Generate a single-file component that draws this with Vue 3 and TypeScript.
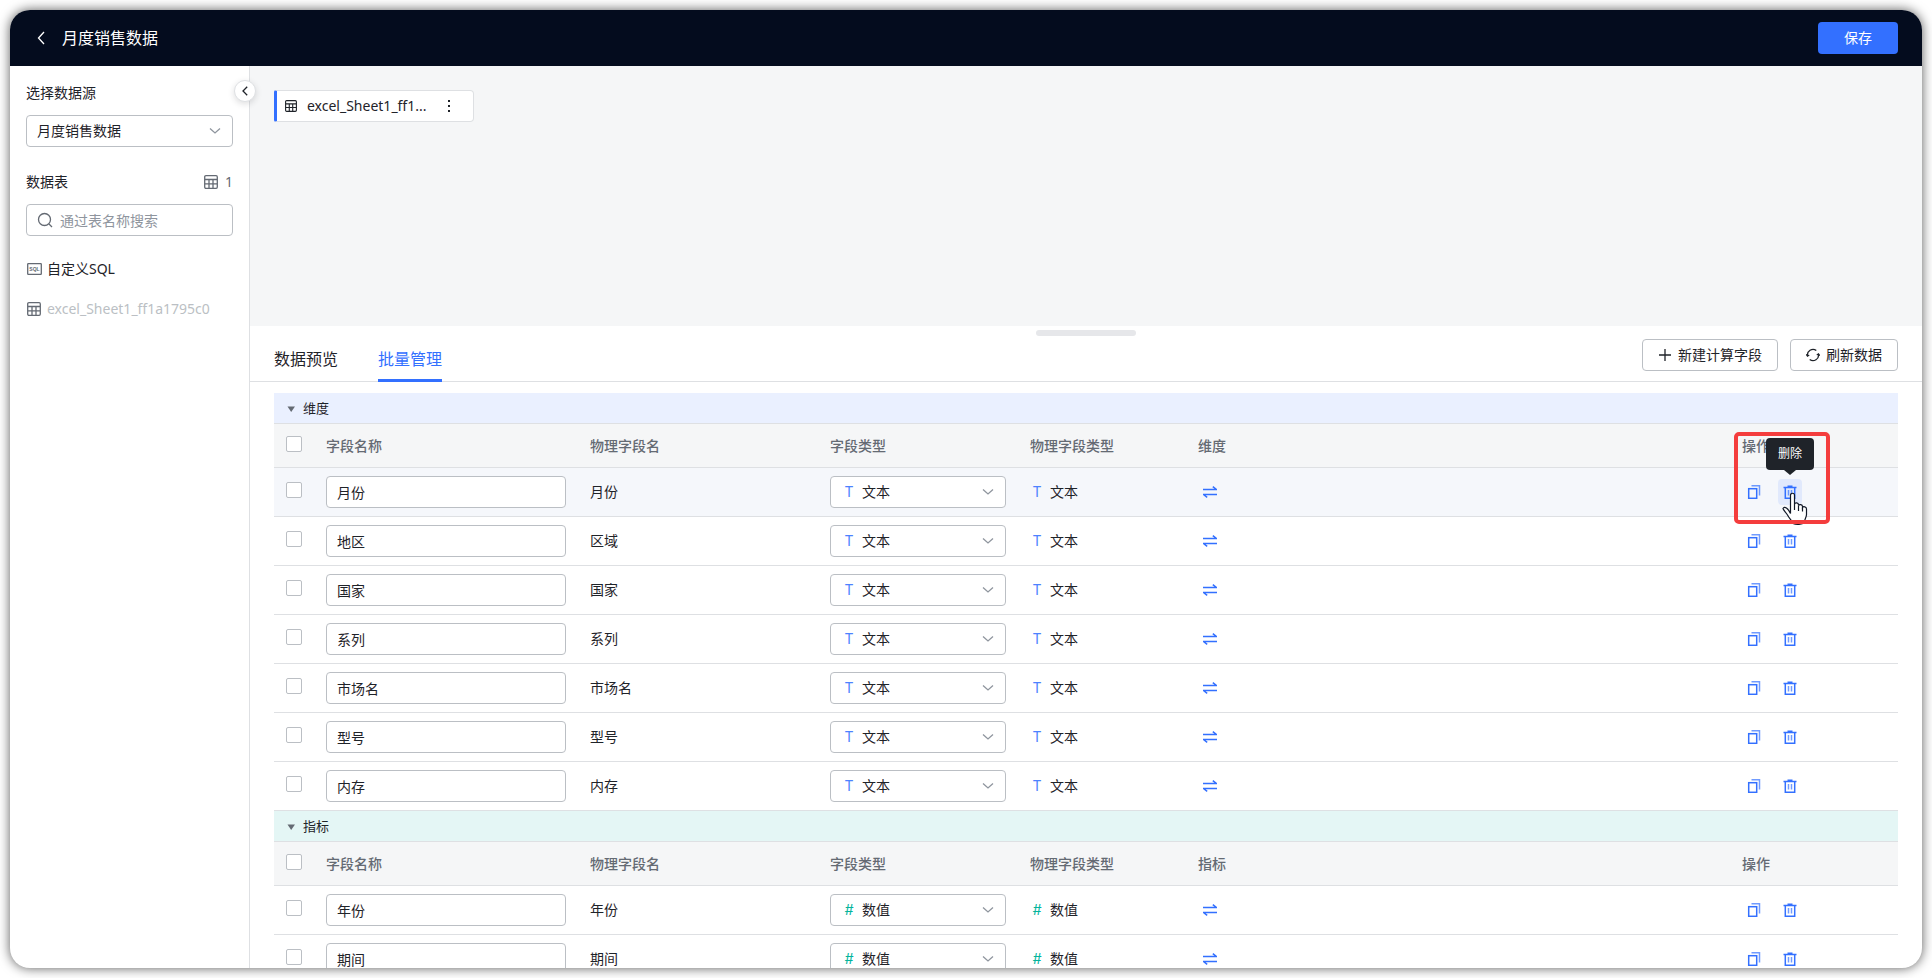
<script setup lang="ts">
import { ref } from 'vue'

interface Field {
  name: string
  physical: string
}

interface Group {
  key: string
  title: string
  glyph: string
  type: string
  fields: Field[]
}

const groups = ref<Group[]>([
  {
    key: 'dimension',
    title: '维度',
    glyph: 'T',
    type: '文本',
    fields: [
      { name: '月份', physical: '月份' },
      { name: '地区', physical: '区域' },
      { name: '国家', physical: '国家' },
      { name: '系列', physical: '系列' },
      { name: '市场名', physical: '市场名' },
      { name: '型号', physical: '型号' },
      { name: '内存', physical: '内存' },
    ],
  },
  {
    key: 'metric',
    title: '指标',
    glyph: '#',
    type: '数值',
    fields: [
      { name: '年份', physical: '年份' },
      { name: '期间', physical: '期间' },
    ],
  },
])

const collapsed = ref<Record<string, boolean>>({})
const activeTab = ref('batch')
const source = ref('月度销售数据')
const keyword = ref('')

function isHovered(group: Group, index: number): boolean {
  return group.key === 'dimension' && index === 0
}
</script>

<template>
  <div class="window">
    <header class="topbar">
      <button class="back" type="button" aria-label="返回">
        <svg width="10" height="16" viewBox="0 0 10 16"><path d="M8 2 2.500 8 8 14" /></svg>
      </button>
      <h1>月度销售数据</h1>
      <button class="save" type="button">保存</button>
    </header>

    <div class="body">
      <aside class="sidebar">
        <label class="side-label" for="source">选择数据源</label>
        <div class="box">
          <select id="source" v-model="source">
            <option>月度销售数据</option>
          </select>
          <svg class="chevron" width="12" height="8" viewBox="0 0 12 8"><path d="m1 1.500 5 4.500 5-4.500" /></svg>
        </div>

        <div class="tables-head">
          <label class="side-label" for="search">数据表</label>
          <span class="count">
            <svg class="grid-icon" width="14" height="14" viewBox="0 0 14 14">
              <rect x=".7" y=".7" width="12.600" height="12.600" rx="1.200" />
              <path d="M1 4.500h12M1 8.800h12M5 4.500V13M9 4.500V13" />
            </svg>
            1
          </span>
        </div>
        <div class="box search">
          <svg class="search-icon" width="16" height="16" viewBox="0 0 16 16">
            <circle cx="7.500" cy="7.500" r="6" />
            <path d="m12 12 3 3" />
          </svg>
          <input id="search" v-model="keyword" type="text" placeholder="通过表名称搜索" />
        </div>

        <ul class="table-list">
          <li>
            <svg class="sql-icon" width="16" height="14" viewBox="0 0 16 14">
              <rect x="1.700" y="1.700" width="13.600" height="10.600" rx=".6" />
              <text x="8.500" y="9" text-anchor="middle">SQL</text>
            </svg>
            <span>自定义SQL</span>
          </li>
          <li class="used">
            <svg class="grid-icon" width="16" height="14" viewBox="0 0 16 14">
              <rect x="1.700" y=".7" width="12.600" height="12.600" rx="1.200" />
              <path d="M2 4.500h12M2 8.800h12M6 4.500V13M10 4.500V13" />
            </svg>
            <span>excel_Sheet1_ff1a1795c0</span>
          </li>
        </ul>

        <button class="collapse" type="button" aria-label="收起">
          <svg width="6" height="10" viewBox="0 0 6 10"><path d="M5.200.8 1 5l4.200 4.200" /></svg>
        </button>
      </aside>

      <main class="main">
        <section class="canvas">
          <div class="node">
            <svg class="grid-icon dark" width="12" height="12" viewBox="0 0 14 14">
              <rect x=".7" y=".7" width="12.600" height="12.600" rx="1.200" />
              <path d="M1 4.500h12M1 8.800h12M5 4.500V13M9 4.500V13" />
            </svg>
            <span class="node-name">excel_Sheet1_ff1...</span>
            <button type="button" class="more" aria-label="更多">
              <svg width="4" height="12" viewBox="0 0 4 12">
                <rect x="1" y="0" width="2" height="2" /><rect x="1" y="5" width="2" height="2" /><rect x="1" y="10" width="2" height="2" />
              </svg>
            </button>
          </div>
        </section>

        <section class="panel">
          <div class="panel-bar">
            <span class="handle"></span>
            <nav class="tabs">
              <button type="button" :class="{ active: activeTab === 'preview' }" @click="activeTab = 'preview'">数据预览</button>
              <button type="button" :class="{ active: activeTab === 'batch' }" @click="activeTab = 'batch'">批量管理</button>
            </nav>
            <div class="tools">
              <button type="button">
                <svg width="14" height="14" viewBox="0 0 14 14"><path d="M7 1v12M1 7h12" /></svg>
                新建计算字段
              </button>
              <button type="button">
                <svg width="14" height="14" viewBox="0 0 14 14">
                  <path d="M1.500 8A5.600 5.600 0 0 1 10.300 2.500M12.500 6A5.600 5.600 0 0 1 3.700 11.500" />
                  <path d="M.3 6.400 1.500 8.200 3.200 7M13.700 7.600 12.500 5.800 10.800 7" />
                </svg>
                刷新数据
              </button>
            </div>
          </div>

          <div class="groups">
            <section v-for="group in groups" :key="group.key">
              <button type="button" :class="['group-bar', group.key]" @click="collapsed[group.key] = !collapsed[group.key]">
                <svg width="10" height="8" viewBox="0 0 10 8"><path d="M1.500 2.500h7.500L5.200 8z" /></svg>
                {{ group.title }}
              </button>
              <table v-if="!collapsed[group.key]">
                <colgroup>
                  <col class="c-check" /><col class="c-name" /><col class="c-physical" /><col class="c-type" />
                  <col class="c-ptype" /><col /><col class="c-ops" />
                </colgroup>
                <thead>
                  <tr>
                    <th><input type="checkbox" aria-label="全选" /></th>
                    <th>字段名称</th>
                    <th>物理字段名</th>
                    <th>字段类型</th>
                    <th>物理字段类型</th>
                    <th>{{ group.title }}</th>
                    <th>操作</th>
                  </tr>
                </thead>
                <tbody>
                  <tr v-for="(field, i) in group.fields" :key="field.physical" :class="{ hovered: isHovered(group, i) }">
                    <td><input type="checkbox" :aria-label="field.physical" /></td>
                    <td><input v-model="field.name" class="name-input" type="text" aria-label="字段名称" /></td>
                    <td>{{ field.physical }}</td>
                    <td>
                      <div class="box type-box">
                        <span :class="['glyph', group.key]">{{ group.glyph }}</span>
                        <select aria-label="字段类型">
                          <option>{{ group.type }}</option>
                        </select>
                        <svg class="chevron" width="12" height="8" viewBox="0 0 12 8"><path d="m1 1.500 5 4.500 5-4.500" /></svg>
                      </div>
                    </td>
                    <td>
                      <span class="type">
                        <span :class="['glyph', group.key]">{{ group.glyph }}</span>{{ group.type }}
                      </span>
                    </td>
                    <td>
                      <button type="button" class="icon-btn" aria-label="转换">
                        <svg width="14" height="12" viewBox="0 0 14 12"><path d="M0 3.500h13.500L9.800.6M14 8.500H.5l3.700 2.900" /></svg>
                      </button>
                    </td>
                    <td>
                      <div class="ops">
                        <button type="button" class="icon-btn" aria-label="复制">
                          <svg width="14" height="14" viewBox="0 0 14 14">
                            <rect x="1.700" y="3.700" width="8" height="9.600" />
                            <path class="soft" d="M4.500.8h8v9.700" />
                          </svg>
                        </button>
                        <div class="anchor">
                          <button type="button" class="icon-btn remove" aria-label="删除">
                            <svg width="14" height="14" viewBox="0 0 14 14">
                              <path d="M.5 2.500h13M4.500 1.200h5M2.300 2.700v10.600h9.400V2.700" />
                              <path class="soft" d="M5.500 5v5.500M8.500 5v5.500" />
                            </svg>
                          </button>
                          <template v-if="isHovered(group, i)">
                            <div class="tooltip" role="tooltip">删除</div>
                            <svg class="cursor" width="26" height="34" viewBox="0 0 26 34">
                              <path
                                d="M8.500 21.500V3.200C8.500.6 12.500.6 12.500 3.200v8.900c.5-1.900 4-1.500 4 .6v.8c.6-1.600 4-1.100 4 .9v1c.8-1.300 4-.7 4 1.500v5.600c0 3-2 4.500-2 7.500-2.500 3-8.500 3-11.500 1.500-.5-2.500-3.500-4.500-5.500-8.500-1.500-2.500-4-4.500-4.500-6.500 1.500-2.500 5-.5 7.500 5z"
                              />
                              <path d="M12.500 12v6M16.500 13.500V19M20.500 15.500v4" />
                            </svg>
                            <div class="highlight"></div>
                          </template>
                        </div>
                      </div>
                    </td>
                  </tr>
                </tbody>
              </table>
            </section>
          </div>
        </section>
      </main>
    </div>
  </div>
</template>

<style>
body {
  margin: 0;
  background: #fff;
  overflow: hidden;
}
</style>

<style scoped>
* {
  box-sizing: border-box;
}

.window {
  display: flex;
  flex-direction: column;
  height: calc(100vh - 20px);
  margin: 10px;
  overflow: hidden;
  border-radius: 20px;
  background: #fff;
  box-shadow: 0 0 12px rgba(0, 0, 0, 0.65);
  color: #1f2329;
  font: 14px/22px "Noto Sans", "Noto Sans CJK SC", sans-serif;
}

button,
input,
select {
  margin: 0;
  padding: 0;
  border: 0;
  background: none;
  color: inherit;
  font: inherit;
  outline: 0;
}

button {
  cursor: pointer;
}

svg {
  display: block;
  flex: none;
  fill: none;
  stroke: currentColor;
  stroke-width: 1.3;
}

.topbar {
  display: flex;
  flex: none;
  align-items: center;
  height: 56px;
  padding: 0 24px;
  background: #040c1e;
  color: #fff;
}

.back {
  width: 28px;
  padding-left: 2px;
}

h1 {
  flex: 1;
  margin: 0;
  font-size: 16px;
  font-weight: 400;
}

.save {
  width: 80px;
  height: 32px;
  border-radius: 4px;
  background: #3370ff;
}

.body {
  display: flex;
  flex: 1;
  min-height: 0;
}

.sidebar {
  position: relative;
  flex: none;
  width: 240px;
  padding: 16px;
  border-right: 1px solid #dee0e3;
}

.side-label {
  display: block;
}

.box {
  display: flex;
  align-items: center;
  height: 32px;
  padding: 0 11px;
  border: 1px solid #bbbfc4;
  border-radius: 4px;
  background: #fff;
}

.sidebar .box {
  margin-top: 11px;
  padding: 0 11px 0 10px;
}

.box select,
.box input {
  flex: 1;
  min-width: 0;
  height: 30px;
  appearance: none;
}

.chevron {
  color: #8f959e;
  pointer-events: none;
}

.tables-head {
  display: flex;
  justify-content: space-between;
  margin-top: 24px;
}

.count {
  display: flex;
  align-items: center;
  gap: 7px;
  color: #646a73;
}

.grid-icon {
  color: #646a73;
}

.grid-icon.dark {
  color: #1f2329;
}

.search-icon {
  margin-right: 7px;
  color: #646a73;
}

.search input::placeholder {
  color: #8f959e;
  opacity: 1;
}

.table-list {
  margin: 13px 0 0;
  padding: 0;
  list-style: none;
}

.table-list li {
  display: flex;
  align-items: center;
  gap: 5px;
  height: 40px;
}

.used {
  color: #bbbfc4;
}

.sql-icon {
  color: #646a73;
}

.sql-icon text {
  fill: currentColor;
  stroke: none;
  font: bold 5px "Liberation Sans", sans-serif;
}

.collapse {
  position: absolute;
  top: 14px;
  right: -7px;
  z-index: 1;
  display: flex;
  align-items: center;
  justify-content: center;
  width: 22px;
  height: 22px;
  border: 1px solid #dee0e3;
  border-radius: 50%;
  background: #fff;
  box-shadow: 0 2px 6px rgba(31, 35, 41, 0.15);
}

.main {
  display: flex;
  flex: 1;
  flex-direction: column;
  min-width: 0;
}

.canvas {
  flex: none;
  height: 260px;
  padding: 24px;
  background: #f5f6f7;
}

.node {
  display: flex;
  align-items: center;
  width: 200px;
  height: 32px;
  padding-left: 8px;
  border: 1px solid #dee0e3;
  border-left: 3px solid #3370ff;
  border-radius: 2px 4px 4px 2px;
  background: #fff;
}

.node-name {
  width: 124px;
  margin-left: 10px;
}

.more {
  width: 30px;
  height: 30px;
  padding-left: 16px;
}

.more svg {
  fill: #1f2329;
  stroke: none;
}

.panel {
  display: flex;
  flex: 1;
  flex-direction: column;
  min-height: 0;
}

.panel-bar {
  position: relative;
  display: flex;
  flex: none;
  justify-content: space-between;
  height: 56px;
  padding: 0 24px;
  border-bottom: 1px solid #dee0e3;
}

.handle {
  position: absolute;
  top: 4px;
  left: 50%;
  width: 100px;
  height: 6px;
  border-radius: 3px;
  background: #e6e7ea;
  transform: translateX(-50%);
}

.tabs {
  display: flex;
  gap: 40px;
  height: 56px;
}

.tabs button {
  padding-top: 12px;
  border-bottom: 3px solid transparent;
  font-size: 16px;
}

.tabs .active {
  border-color: #3370ff;
  color: #3370ff;
}

.tools {
  display: flex;
  gap: 12px;
  padding-top: 13px;
}

.tools button {
  display: flex;
  align-items: center;
  gap: 6px;
  height: 32px;
  padding: 0 15px;
  border: 1px solid #bbbfc4;
  border-radius: 4px;
}

.groups {
  flex: 1;
  min-height: 0;
  padding: 11px 24px 0;
  overflow: hidden;
}

.group-bar {
  display: flex;
  align-items: center;
  gap: 7px;
  width: 100%;
  height: 31px;
  padding: 0 12px;
  border-bottom: 1px solid #dee0e3;
  font-size: 13px;
}

.group-bar svg {
  fill: #646a73;
  stroke: none;
}

.group-bar.dimension {
  background: #eaf0ff;
}

.group-bar.metric {
  background: #e4f6f5;
}

table {
  width: 100%;
  table-layout: fixed;
  border-collapse: separate;
  border-spacing: 0;
}

.c-check {
  width: 40px;
}

.c-name {
  width: 264px;
}

.c-physical {
  width: 240px;
}

.c-type {
  width: 200px;
}

.c-ptype,
.c-ops {
  width: 168px;
}

th,
td {
  padding: 0 12px;
  border-bottom: 1px solid #dee0e3;
  text-align: left;
  vertical-align: middle;
}

th {
  height: 44px;
  background: #f5f6f7;
  color: #646a73;
  font-weight: 500;
}

td {
  height: 49px;
}

.hovered td {
  background: #f5f7fb;
}

input[type="checkbox"] {
  display: block;
  width: 16px;
  height: 16px;
  margin-bottom: 4px;
  border: 1px solid #bbbfc4;
  border-radius: 2px;
  background: #fff;
  appearance: none;
}

.name-input {
  display: block;
  width: 100%;
  height: 32px;
  padding: 0 10px;
  border: 1px solid #bbbfc4;
  border-radius: 4px;
  background: #fff;
}

.glyph {
  flex: none;
  width: 14px;
  margin-right: 6px;
  font-family: Inter, sans-serif;
  text-align: center;
}

.glyph.dimension {
  color: #4d82ff;
}

.glyph.metric {
  color: #04b49c;
  font-style: italic;
}

.type {
  display: flex;
  align-items: center;
}

.icon-btn {
  display: flex;
  align-items: center;
  justify-content: center;
  width: 24px;
  height: 26px;
  border-radius: 4px;
  color: #3370ff;
}

.icon-btn svg {
  stroke-width: 1.5;
}

.soft {
  opacity: 0.7;
}

.ops {
  display: flex;
  gap: 12px;
}

.anchor {
  position: relative;
}

.hovered .remove {
  background: #e1e9fc;
}

.tooltip {
  position: absolute;
  bottom: 35px;
  left: -12px;
  z-index: 2;
  width: 48px;
  height: 32px;
  border-radius: 4px;
  background: #1f2329;
  color: #fff;
  font-size: 12px;
  line-height: 32px;
  text-align: center;
}

.tooltip::after {
  position: absolute;
  top: 100%;
  left: 50%;
  border: 6px solid transparent;
  border-top: 5px solid #1f2329;
  border-bottom: 0;
  content: "";
  transform: translateX(-50%);
}

.cursor {
  position: absolute;
  top: 13px;
  left: 4px;
  z-index: 2;
  fill: #fff;
  stroke: #111827;
  stroke-width: 1.2;
  pointer-events: none;
}

.highlight {
  position: absolute;
  top: -47px;
  left: -44px;
  z-index: 3;
  width: 96px;
  height: 92px;
  border: 4px solid #f43d3d;
  border-radius: 5px;
  pointer-events: none;
}
</style>
